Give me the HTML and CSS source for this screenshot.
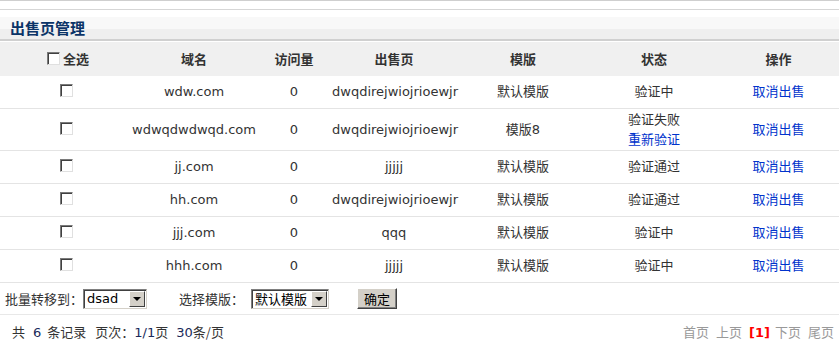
FILE: index.html
```html
<!DOCTYPE html>
<html lang="zh-CN">
<head>
    <meta charset="UTF-8">
    <title>出售页管理</title>
    <link rel="stylesheet" href="styles.css">
</head>
<body>
    <div class="top-bar"></div>
    <div class="title-bar">
        <h2>出售页管理</h2>
    </div>
    <table class="sale-table">
        <colgroup>
            <col class="c-check">
            <col class="c-domain">
            <col class="c-visit">
            <col class="c-page">
            <col class="c-tpl">
            <col class="c-state">
            <col class="c-op">
        </colgroup>
        <thead>
            <tr>
                <th><label class="all"><input type="checkbox" class="chk">全选</label></th>
                <th>域名</th>
                <th>访问量</th>
                <th>出售页</th>
                <th>模版</th>
                <th>状态</th>
                <th>操作</th>
            </tr>
        </thead>
        <tbody>
            <tr>
                <td><input type="checkbox" class="chk"></td>
                <td>wdw.com</td>
                <td>0</td>
                <td>dwqdirejwiojrioewjr</td>
                <td>默认模版</td>
                <td>验证中</td>
                <td><a href="#">取消出售</a></td>
            </tr>
            <tr class="tall">
                <td><input type="checkbox" class="chk"></td>
                <td>wdwqdwdwqd.com</td>
                <td>0</td>
                <td>dwqdirejwiojrioewjr</td>
                <td>模版8</td>
                <td>验证失败<br><a href="#">重新验证</a></td>
                <td><a href="#">取消出售</a></td>
            </tr>
            <tr>
                <td><input type="checkbox" class="chk"></td>
                <td>jj.com</td>
                <td>0</td>
                <td>jjjjj</td>
                <td>默认模版</td>
                <td>验证通过</td>
                <td><a href="#">取消出售</a></td>
            </tr>
            <tr>
                <td><input type="checkbox" class="chk"></td>
                <td>hh.com</td>
                <td>0</td>
                <td>dwqdirejwiojrioewjr</td>
                <td>默认模版</td>
                <td>验证通过</td>
                <td><a href="#">取消出售</a></td>
            </tr>
            <tr>
                <td><input type="checkbox" class="chk"></td>
                <td>jjj.com</td>
                <td>0</td>
                <td>qqq</td>
                <td>默认模版</td>
                <td>验证中</td>
                <td><a href="#">取消出售</a></td>
            </tr>
            <tr>
                <td><input type="checkbox" class="chk"></td>
                <td>hhh.com</td>
                <td>0</td>
                <td>jjjjj</td>
                <td>默认模版</td>
                <td>验证中</td>
                <td><a href="#">取消出售</a></td>
            </tr>
        </tbody>
    </table>
    <div class="batch">
        <span>批量转移到：</span>
        <span class="select w1"><span class="val">dsad</span><span class="arrow"></span></span>
        <span class="gap">选择模版：</span>
        <span class="select w2"><span class="val">默认模版</span><span class="arrow"></span></span>
        <button class="btn">确定</button>
    </div>
    <div class="pager">
        <div class="info">
            <span>共</span><b>6</b><span>条记录</span><span class="sp">页次：</span><b class="tight">1/1</b><span>页</span><b class="last">30</b><span>条/页</span>
        </div>
        <div class="links">
            <span>首页</span>
            <span>上页</span>
            <span class="cur">[1]</span>
            <span>下页</span>
            <span>尾页</span>
        </div>
    </div>
</body>
</html>
```

FILE: styles.css
```css
body {
    margin: 0;
    font-family: "DejaVu Sans", "Noto Sans CJK SC", sans-serif;
    font-size: 13px;
    color: #333;
    background: #fff;
}
.top-bar {
    height: 8px;
    border-top: 1px solid #cfcfcf;
    border-bottom: 1px solid #d6d6d6;
    margin-bottom: 7px;
}
.title-bar {
    height: 22px;
    background: linear-gradient(#f8f8f8 0, #f8f8f8 55%, #efefef 55%, #efefef 100%);
    border-bottom: 2px solid #d0d0d0;
    padding-left: 10px;
    margin-bottom: 1px;
}
.title-bar h2 {
    margin: 0;
    font-family: "Noto Sans CJK SC", sans-serif;
    font-size: 15px;
    line-height: 21px;
    font-weight: bold;
    color: #0b3467;
}
.sale-table {
    width: 100%;
    border-collapse: collapse;
    table-layout: fixed;
}
.c-check { width: 132px; }
.c-domain { width: 124px; }
.c-visit { width: 76px; }
.c-page { width: 124px; }
.c-tpl { width: 134px; }
.c-state { width: 128px; }
.sale-table th {
    background: #f0f0f0;
    height: 33px;
    padding: 0 0 1px;
    font-family: "Noto Sans CJK SC", sans-serif;
    font-size: 13px;
    font-weight: bold;
    color: #333;
    text-align: center;
}
.sale-table td {
    height: 32px;
    padding: 0;
    text-align: center;
    border-bottom: 1px solid #e4e4e4;
    line-height: 20px;
}
.sale-table tr.tall td {
    height: 41px;
}
.sale-table a {
    color: #0033cc;
    text-decoration: none;
}
.all {
    display: inline-flex;
    align-items: center;
    margin-left: 4px;
}
.chk {
    appearance: none;
    width: 13px;
    height: 13px;
    margin: 0;
    box-sizing: border-box;
    border: 1px solid;
    border-color: #7a7a7a #e0e0e0 #e0e0e0 #7a7a7a;
    box-shadow: inset 1px 1px 0 #404040;
    background: #fff;
    vertical-align: middle;
    position: relative;
    top: -2px;
}
.all .chk {
    top: 0;
    margin-right: 3px;
}
.batch {
    display: flex;
    align-items: center;
    height: 31px;
    padding-left: 5px;
    border-bottom: 1px solid #e8e8e8;
    font-family: "Noto Sans CJK SC", sans-serif;
    font-size: 13px;
}
.select {
    display: inline-flex;
    height: 20px;
    box-sizing: border-box;
    border: 1px solid;
    border-color: #7f7f7f #d4d0c8 #d4d0c8 #7f7f7f;
    box-shadow: inset 1px 1px 0 #404040;
    background: #fff;
}
.select.w1 { width: 64px; }
.select.w2 { width: 78px; margin-left: 7px; }
.select .val {
    flex: 1;
    padding: 1px 0 0 3px;
    font-size: 13px;
    line-height: 16px;
    color: #000;
    white-space: nowrap;
}
.select.w1 .val {
    font-family: "DejaVu Sans", sans-serif;
}
.select .arrow {
    width: 16px;
    flex: none;
    margin: 1px 1px 1px 0;
    box-sizing: border-box;
    background: #d4d0c8;
    border: 1px solid;
    border-color: #fff #404040 #404040 #fff;
    display: flex;
    align-items: center;
    justify-content: center;
}
.select .arrow::after {
    content: "";
    border-left: 4px solid transparent;
    border-right: 4px solid transparent;
    border-top: 4px solid #000;
}
.gap {
    margin-left: 32px;
}
.btn {
    margin-left: 28px;
    width: 40px;
    height: 21px;
    padding: 0;
    font-family: "Noto Sans CJK SC", sans-serif;
    font-size: 13px;
    color: #000;
    background: #d4d0c8;
    border: 1px solid;
    border-color: #fff #404040 #404040 #fff;
    box-shadow: inset -1px -1px 0 #808080;
}
.pager {
    display: flex;
    justify-content: space-between;
    align-items: center;
    height: 33px;
    padding: 0 5px 0 12px;
    font-family: "Noto Sans CJK SC", sans-serif;
    font-size: 13px;
}
.info {
    display: flex;
    align-items: baseline;
}
.info b {
    font-weight: normal;
    font-family: "DejaVu Sans", sans-serif;
    color: #1a2a5a;
    margin: 0 6px 0 8px;
}
.info b.tight {
    margin: 0;
}
.info b.last {
    margin-right: 0;
}
.info .sp {
    margin-left: 9px;
}
.links {
    display: flex;
    align-items: baseline;
    gap: 7px;
    color: #999;
    font-size: 13px;
}
.links .cur {
    color: #ff0000;
    font-weight: bold;
    font-family: "DejaVu Sans", sans-serif;
    margin-right: -2px;
}
```
